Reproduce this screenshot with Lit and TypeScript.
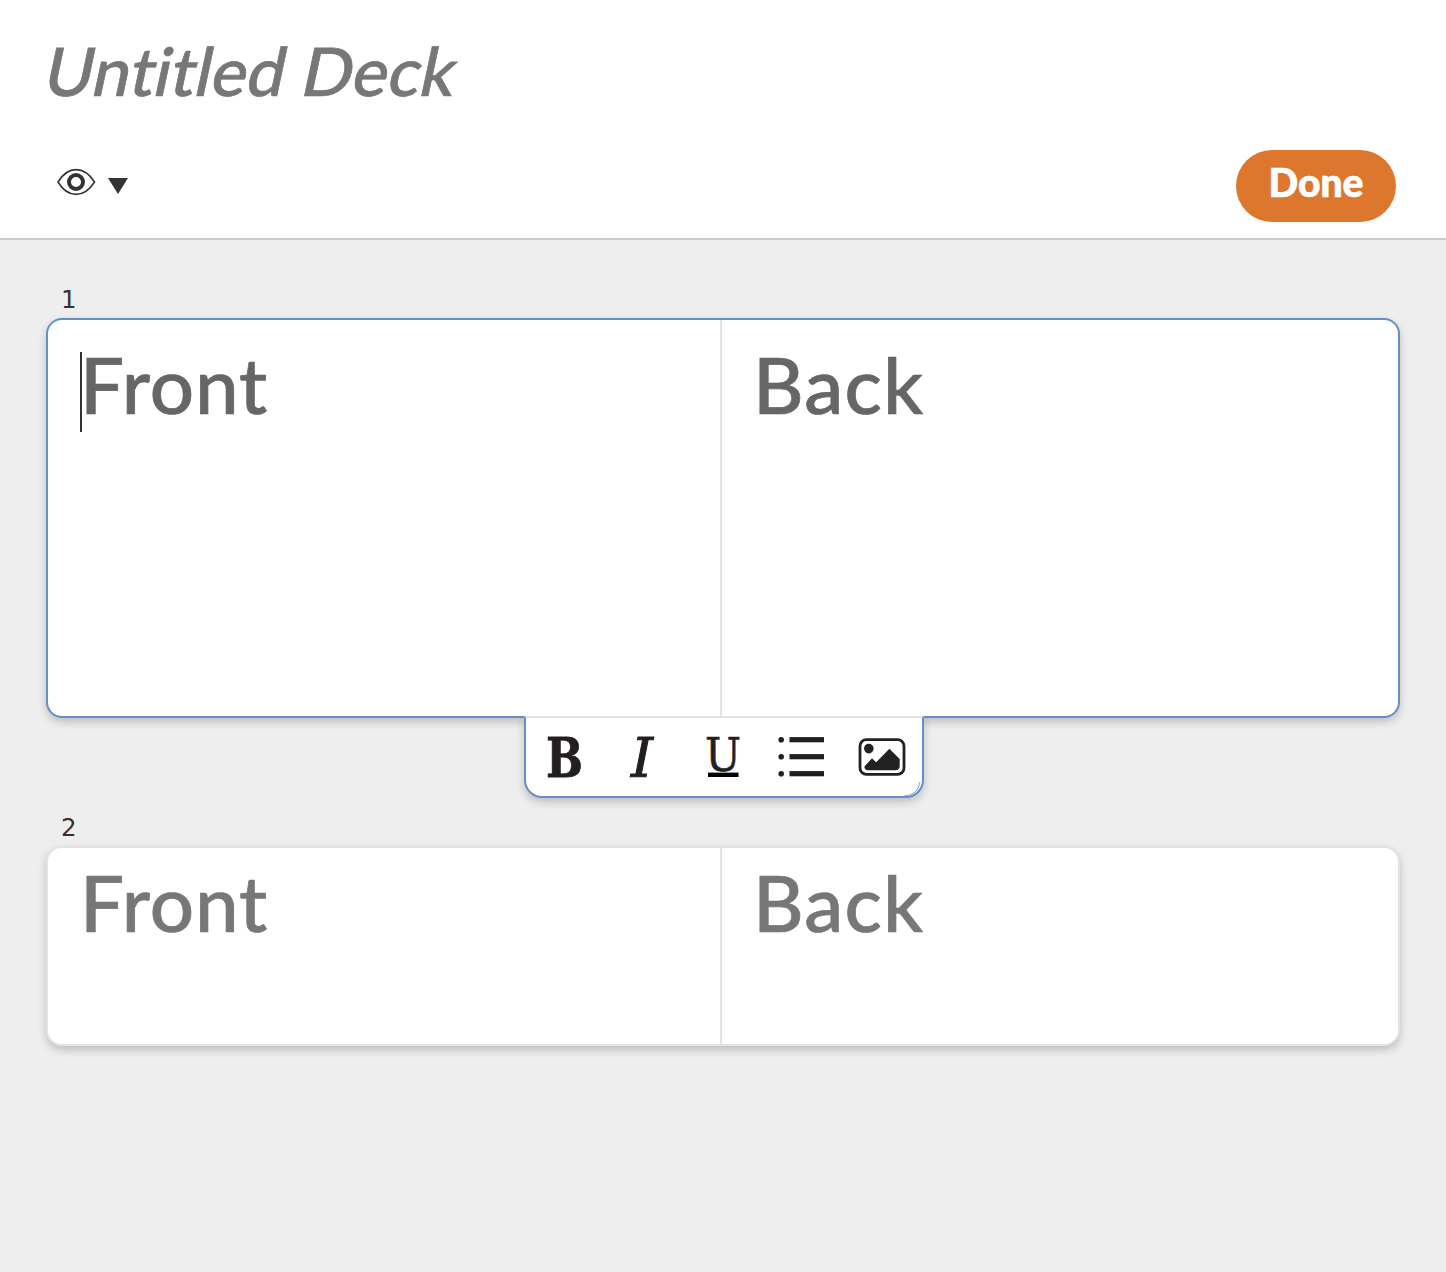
import { LitElement, html, svg, css } from "lit";
import { customElement, property } from "lit/decorators.js";

@customElement("format-toolbar")
class FormatToolbar extends LitElement {
  static styles = css`
    :host { display: block; box-sizing: border-box; width: 400px; height: 82px; background: #fff; border: 2px solid #6490c8; border-top-color: #e3e3e3; border-radius: 0 0 18px 18px; box-shadow: 0 4px 8px rgba(0, 0, 0, 0.2); clip-path: inset(0 -16px -16px -16px); }
    svg { display: block; width: 396px; height: 78px; overflow: visible; }
    text { font-family: "DejaVu Serif", serif; fill: #231f20; }
    .bold { font-weight: 700; font-size: 54px; stroke: #231f20; stroke-width: 0.8; }
    .italic { font-style: italic; font-size: 54px; stroke: #231f20; stroke-width: 1; }
    .under { font-size: 46px; stroke: #231f20; stroke-width: 0.6; }
  `;
  render() {
    return html`<svg viewBox="526 718 396 78">
      <text class="bold" x="546" y="776.7" textLength="37" lengthAdjust="spacingAndGlyphs">B</text>
      <text class="italic" x="631" y="776.8" textLength="22" lengthAdjust="spacingAndGlyphs">I</text>
      <text class="under" x="705" y="770.5" textLength="36" lengthAdjust="spacingAndGlyphs">U</text>
      <rect x="708" y="772.6" width="30.5" height="4.4" fill="#000" />
      ${[739.7, 756.7, 773.7].map(
        (y) => svg`<circle cx="781.2" cy=${y} r="2.8" fill="#231f20"/><rect x="789.5" y=${y - 2.6} width="34.5" height="5.2" fill="#231f20"/>`
      )}
      <rect x="860" y="739.6" width="44" height="34.8" rx="6.5" fill="none" stroke="#222" stroke-width="2.8" />
      <circle cx="868.8" cy="748.6" r="4.8" fill="#222" />
      <path d="M864.4 766.5l7.6-8.3 4.2 4 13.2-13.4L899.7 759v6.8q0 4.4-4.4 4.4H868q-3.6 0-3.6-3.7z" fill="#222" />
      <path d="M904 796Q918 795 920 782" fill="none" stroke="#6490c8" stroke-width="0.8" />
    </svg>`;
  }
}

@customElement("card-row")
class CardRow extends LitElement {
  @property({ type: Number }) index = 1;
  @property({ type: Boolean, reflect: true }) active = false;
  static styles = css`
    :host { display: block; position: relative; height: 228px; color: #777; }
    :host([active]) { height: 428px; color: #666; }
    .num { height: 28px; padding-left: 15px; box-sizing: border-box; font: 24.5px/20px "DejaVu Sans", sans-serif; color: #333; }
    .card { display: grid; grid-template-columns: 672px 1fr; box-sizing: border-box; height: 200px; border: 2px solid #e3e3e3; border-radius: 16px; background: #fff; box-shadow: 0 4px 8px rgba(0, 0, 0, 0.2); }
    :host([active]) .card { height: 400px; border-color: #6490c8; }
    .side { box-sizing: border-box; padding: 14px 0 0 32px; font: 500 78px/80px Lato, sans-serif; letter-spacing: 0.9px; -webkit-text-stroke: 0.7px currentColor; }
    :host([active]) .side { padding-top: 24px; }
    .back { border-left: 2px solid #e3e3e3; padding-left: 31px; letter-spacing: 1.2px; }
    .caret { position: absolute; left: 34px; top: 62px; width: 2px; height: 80px; background: #333; }
    format-toolbar { position: absolute; left: 478px; top: 426px; }
  `;
  render() {
    return html`<div class="num">${this.index}</div>
      <div class="card">
        <div class="side front">Front</div>
        <div class="side back">Back</div>
      </div>
      ${this.active ? html`<span class="caret"></span><format-toolbar></format-toolbar>` : null}`;
  }
}

@customElement("app-root")
class AppRoot extends LitElement {
  static styles = css`
    :host { display: block; height: 1272px; background: #eee; overflow: hidden; }
    header { box-sizing: border-box; height: 240px; background: #fff; border-bottom: 2px solid #ccc; padding: 30px 50px 0 41px; }
    h1 { margin: 0; height: 120px; font: 500 67px/80px Lato, sans-serif; letter-spacing: 0.15px; font-variant-ligatures: none; -webkit-text-stroke: 0.7px currentColor; color: #777; white-space: nowrap; transform: skewX(-12deg); transform-origin: 0 66px; }
    .bar { display: flex; justify-content: space-between; padding-left: 5px; }
    .eye { width: 90px; height: 72px; }
    button { width: 160px; height: 72px; border: 0; border-radius: 36px; padding: 0 0 8px; background: #dc772d; color: #fff; font: 900 39px/64px Lato, sans-serif; -webkit-text-stroke: 0.7px currentColor; }
    main { display: flex; flex-direction: column; gap: 100px; padding: 50px 46px 0; }
  `;
  render() {
    return html`<header>
        <h1>Untitled Deck</h1>
        <div class="bar">
          <svg class="eye" viewBox="46 150 90 72">
            <path d="M58 182C68 165.5 84 165.5 94.5 182C84 198.5 68 198.5 58 182Z" fill="#fff" stroke="#333" stroke-width="1.6" />
            <circle cx="76" cy="182" r="7" fill="none" stroke="#333" stroke-width="4" />
            <path d="M108 178h20l-10 16z" fill="#333" />
          </svg>
          <button>Done</button>
        </div>
      </header>
      <main>
        <card-row index="1" active></card-row>
        <card-row index="2"></card-row>
      </main>`;
  }
}
